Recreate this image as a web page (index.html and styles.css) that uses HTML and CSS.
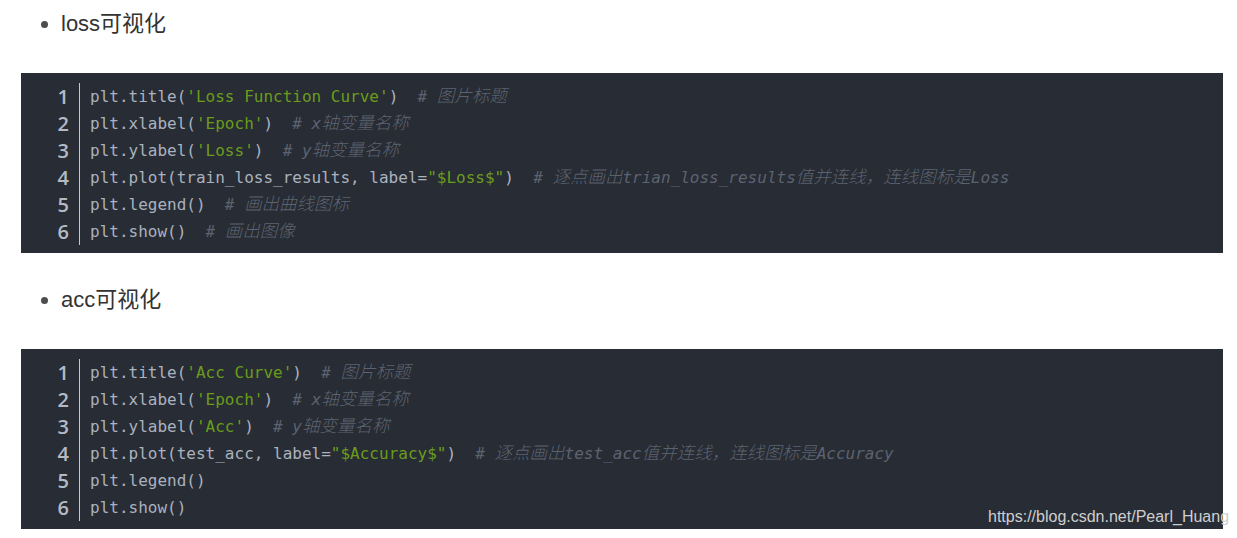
FILE: index.html
```html
<!DOCTYPE html>
<html lang="zh">
<head>
<meta charset="utf-8">
<link rel="stylesheet" href="styles.css">
</head>
<body>
<div class="page">
  <ul class="bullets"><li>loss可视化</li></ul>
  <div class="code">
    <div class="gutter"><span>1</span><span>2</span><span>3</span><span>4</span><span>5</span><span>6</span></div>
    <pre class="src"><span class="ln">plt.title(<span class="s">'Loss Function Curve'</span>)  <span class="c"># <span class="h">图片标题</span></span></span>
<span class="ln">plt.xlabel(<span class="s">'Epoch'</span>)  <span class="c"># x<span class="h">轴变量名称</span></span></span>
<span class="ln">plt.ylabel(<span class="s">'Loss'</span>)  <span class="c"># y<span class="h">轴变量名称</span></span></span>
<span class="ln">plt.plot(train_loss_results, label=<span class="s">"$Loss$"</span>)  <span class="c"># <span class="h">逐点画出</span>trian_loss_results<span class="h">值并连线，连线图标是</span>Loss</span></span>
<span class="ln">plt.legend()  <span class="c"># <span class="h">画出曲线图标</span></span></span>
<span class="ln">plt.show()  <span class="c"># <span class="h">画出图像</span></span></span></pre>
  </div>
  <ul class="bullets second"><li>acc可视化</li></ul>
  <div class="code">
    <div class="gutter"><span>1</span><span>2</span><span>3</span><span>4</span><span>5</span><span>6</span></div>
    <pre class="src"><span class="ln">plt.title(<span class="s">'Acc Curve'</span>)  <span class="c"># <span class="h">图片标题</span></span></span>
<span class="ln">plt.xlabel(<span class="s">'Epoch'</span>)  <span class="c"># x<span class="h">轴变量名称</span></span></span>
<span class="ln">plt.ylabel(<span class="s">'Acc'</span>)  <span class="c"># y<span class="h">轴变量名称</span></span></span>
<span class="ln">plt.plot(test_acc, label=<span class="s">"$Accuracy$"</span>)  <span class="c"># <span class="h">逐点画出</span>test_acc<span class="h">值并连线，连线图标是</span>Accuracy</span></span>
<span class="ln">plt.legend()</span>
<span class="ln">plt.show()</span></pre>
    <div class="watermark">https://blog.csdn.net/Pearl_Huang</div>
  </div>
</div>
</body>
</html>
```

FILE: styles.css
```css
html, body {
  margin: 0;
  padding: 0;
  background: #ffffff;
}
.page {
  padding: 11px 14px 0 21px;
  font-family: "Liberation Sans", Arial, "Noto Sans CJK SC", sans-serif;
}
.bullets {
  margin: 0;
  padding: 0 0 0 40px;
  list-style: disc;
  font-size: 22px;
  line-height: 26px;
  color: #333333;
}
.bullets li::marker {
  color: #4d4d4d;
}
.second {
  margin-top: 34px;
}
.code {
  position: relative;
  margin-top: 36px;
  background: #282c34;
  display: flex;
  padding: 10px 0 8px 0;
  height: 162px;
}
.gutter {
  display: flex;
  flex-direction: column;
  width: 48px;
  padding-right: 10px;
  border-right: 1px solid #c5c8cc;
  text-align: right;
  font-family: "Open Sans", "DejaVu Sans", sans-serif;
  font-size: 20px;
  font-weight: 600;
  color: #b4bac4;
}
.gutter span {
  display: block;
  height: 27px;
  line-height: 27px;
}
.src {
  margin: 0;
  padding-left: 10px;
  font-family: "DejaVu Sans Mono", "Liberation Mono", "Noto Sans CJK SC", monospace;
  font-size: 16px;
  line-height: 27px;
  color: #abb2bf;
  white-space: pre;
}
.s {
  color: #6a9c1c;
}
.c {
  color: #5c6370;
  font-style: italic;
}
.h {
  font-family: "Noto Sans CJK SC", sans-serif;
  font-size: 17.5px;
  font-weight: 300;
  line-height: 1;
}
.watermark {
  position: absolute;
  left: 967px;
  bottom: 2px;
  font-family: "Liberation Sans", Arial, sans-serif;
  font-size: 16px;
  line-height: 20px;
  color: #cfcfcf;
  white-space: nowrap;
}
```
